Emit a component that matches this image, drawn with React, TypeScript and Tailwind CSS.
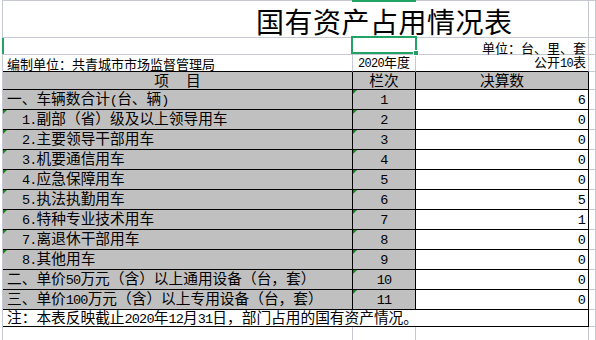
import React from 'react';

function T({ s }: { s: string }) {
  const parts = s.split(/([\x21-\x7e]+)/);
  return (
    <span className="whitespace-nowrap">
      {parts.map((p, i) =>
        /^[\x21-\x7e]+$/.test(p) ? (
          <span key={i} className="font-['Liberation_Mono',monospace] text-[0.92em] tracking-[-0.06em]">
            {p}
          </span>
        ) : (
          <React.Fragment key={i}>{p}</React.Fragment>
        )
      )}
    </span>
  );
}

function Tri() {
  return (
    <svg className="absolute left-0 top-0" width="4" height="4" viewBox="0 0 4 4">
      <polygon points="0,0 4,0 0,4" fill="#0b8a0b" />
    </svg>
  );
}

const rows = [
  { label: '一、车辆数合计(台、辆)', indent: false, n: '1', v: '6', triA: false },
  { label: '1.副部（省）级及以上领导用车', indent: true, n: '2', v: '0', triA: true },
  { label: '2.主要领导干部用车', indent: true, n: '3', v: '0', triA: true },
  { label: '3.机要通信用车', indent: true, n: '4', v: '0', triA: true },
  { label: '4.应急保障用车', indent: true, n: '5', v: '0', triA: true },
  { label: '5.执法执勤用车', indent: true, n: '6', v: '5', triA: true },
  { label: '6.特种专业技术用车', indent: true, n: '7', v: '1', triA: true },
  { label: '7.离退休干部用车', indent: true, n: '8', v: '0', triA: true },
  { label: '8.其他用车', indent: true, n: '9', v: '0', triA: true },
  { label: '二、单价50万元（含）以上通用设备（台，套）', indent: false, n: '10', v: '0', triA: false },
  { label: '三、单价100万元（含）以上专用设备（台，套）', indent: false, n: '11', v: '0', triA: false },
];

export default function App() {
  return (
    <div className="relative w-[596px] h-[340px] overflow-hidden bg-white pl-[2px] font-['Noto_Sans_CJK_SC',sans-serif] text-black leading-none">
      <div className="border-l border-t border-[#c6c8d4] h-[340px]">
        {/* Row 1: title */}
        <div className="flex h-[37px]">
          <div className="w-[586px] border-r border-b border-[#c6c8d4] flex items-center pl-[253px] pt-[4px] text-[28px] tracking-[0.5px] whitespace-nowrap">
            国有资产占用情况表
          </div>
          <div className="w-[7px] border-r border-b border-[#c6c8d4]" />
        </div>
        {/* Row 2 */}
        <div className="flex h-[17px] text-[13px]">
          <div className="w-[350px] border-r border-b border-[#c6c8d4]" />
          <div className="w-[63px] border-r border-b border-[#c6c8d4]" />
          <div className="w-[173px] border-r border-b border-[#c6c8d4] flex items-center justify-end pr-[2px] pt-[2px] whitespace-nowrap">
            单位：台、里、套
          </div>
          <div className="w-[7px] border-r border-b border-[#c6c8d4]" />
        </div>
        {/* Row 3 */}
        <div className="flex h-[17px] text-[13px]">
          <div className="w-[350px] border-r border-[#c6c8d4] border-b border-b-black flex items-center pl-[4px] whitespace-nowrap">
            编制单位：共青城市市场监督管理局
          </div>
          <div className="w-[63px] border-r border-[#c6c8d4] border-b border-b-black flex items-center justify-center">
            <T s="2020年度" />
          </div>
          <div className="w-[173px] border-r border-[#c6c8d4] border-b border-b-black flex items-center justify-end pr-[2px]">
            <T s="公开10表" />
          </div>
          <div className="w-[7px] border-r border-b border-[#c6c8d4]" />
        </div>
        {/* Header row */}
        <div className="flex h-[18px] text-[14.7px]">
          <div className="w-[350px] border-r border-b border-black bg-[#c0c0c0] flex items-center justify-center gap-[17px]">
            <span>项</span>
            <span>目</span>
          </div>
          <div className="w-[63px] border-r border-b border-black bg-[#c0c0c0] flex items-center justify-center">
            栏次
          </div>
          <div className="w-[173px] border-r border-b border-black bg-[#c0c0c0] flex items-center justify-center">
            决算数
          </div>
          <div className="w-[7px] border-r border-b border-[#c6c8d4]" />
        </div>
        {/* Body */}
        {rows.map((r, i) => (
          <div key={i} className="flex h-[20px] text-[14.7px]">
            <div
              className={
                r.indent
                  ? 'relative w-[350px] border-r border-b border-black bg-[#c0c0c0] flex items-center pl-[19px]'
                  : 'relative w-[350px] border-r border-b border-black bg-[#c0c0c0] flex items-center pl-[4px]'
              }
            >
              {r.triA && <Tri />}
              <T s={r.label} />
            </div>
            <div className="relative w-[63px] border-r border-b border-black bg-[#c0c0c0] flex items-center justify-center">
              <Tri />
              <T s={r.n} />
            </div>
            <div className="w-[173px] border-r border-b border-black bg-white flex items-center justify-end pr-[3px]">
              <T s={r.v} />
            </div>
            <div className="w-[7px] border-r border-b border-[#c6c8d4]" />
          </div>
        ))}
        {/* Note row */}
        <div className="flex h-[17px] text-[14.7px]">
          <div className="w-[586px] border-r border-b border-black flex items-center pl-[4px]">
            <T s="注：本表反映截止2020年12月31日，部门占用的国有资产情况。" />
          </div>
          <div className="w-[7px] border-r border-b border-[#c6c8d4]" />
        </div>
        {/* Filler */}
        <div className="flex h-[20px]">
          <div className="w-[350px] border-r border-[#c6c8d4]" />
          <div className="w-[63px] border-r border-[#c6c8d4]" />
          <div className="w-[173px] border-r border-[#c6c8d4]" />
          <div className="w-[7px] border-r border-[#c6c8d4]" />
        </div>
      </div>

      {/* Excel selection highlights */}
      <div className="absolute left-[352px] top-0 w-[64px] h-[2px] bg-[#22a366]" />
      <div className="absolute left-[2px] top-[38px] w-[2px] h-[16px] bg-[#22a366]" />
      <div className="absolute left-[351px] top-[36px] w-[66px] h-[18px] border-2 border-[#22a366]" />
      <div className="absolute left-[413px] top-[50px] w-[6px] h-[6px] bg-[#22a366] border border-white" />
    </div>
  );
}
